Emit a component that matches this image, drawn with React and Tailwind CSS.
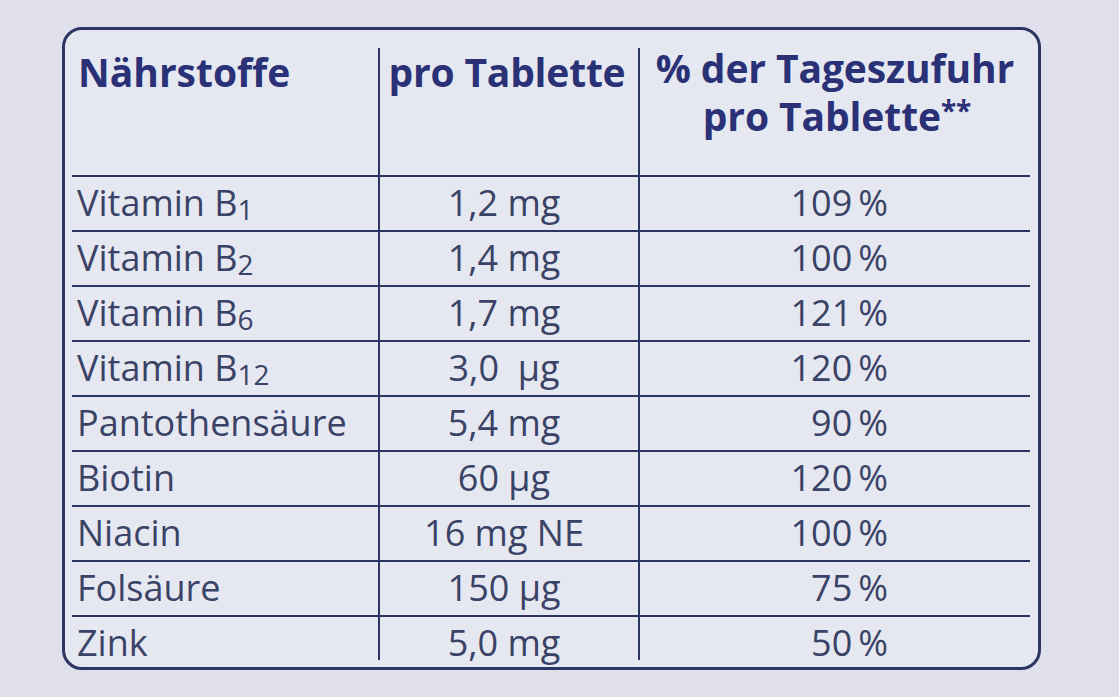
const rows = [
  { name: "Vitamin B", sub: "1", amount: "1,2 mg", pct: "109\u2009%" },
  { name: "Vitamin B", sub: "2", amount: "1,4 mg", pct: "100\u2009%" },
  { name: "Vitamin B", sub: "6", amount: "1,7 mg", pct: "121\u2009%" },
  { name: "Vitamin B", sub: "12", amount: "3,0\u00a0\u00a0µg", pct: "120\u2009%" },
  { name: "Pantothensäure", amount: "5,4 mg", pct: "90\u2009%" },
  { name: "Biotin", amount: "60 µg", pct: "120\u2009%" },
  { name: "Niacin", amount: "16 mg NE", pct: "100\u2009%" },
  { name: "Folsäure", amount: "150 µg", pct: "75\u2009%" },
  { name: "Zink", amount: "5,0 mg", pct: "50\u2009%" },
];

export default function App() {
  return (
    <div
      className="w-[1119px] h-[697px] bg-[#e0dfec] overflow-hidden pt-[27px] pl-[62px]"
      style={{ fontFamily: '"Open Sans", "Noto Sans", sans-serif' }}
    >
      <div className="w-[979px] h-[643px] border-[3px] border-[#2d3562] rounded-[20px] bg-[#e6e8f1] pt-[18px] pl-[7px] pr-[8px] pb-[7px] flex flex-col">
        {/* header */}
        <div className="flex h-[127px] shrink-0 text-[#2a3176] font-bold text-[39px] leading-[48px]">
          <div className="w-[306px] pl-[6px]">Nährstoffe</div>
          <div className="w-[260px] border-l-2 border-[#2d3562] text-center pr-[4px] tracking-[-0.2px]">
            pro Tablette
          </div>
          <div className="flex-1 border-l-2 border-[#2d3562] text-center tracking-[-0.1px]">
            <div className="-mt-[4px]">% der Tageszufuhr</div>
            <div className="pl-[4px]">
              pro Tablette
              <span className="text-[28px] align-[10px] leading-none">**</span>
            </div>
          </div>
        </div>
        {/* body */}
        {rows.map((r, i) => (
          <div
            key={i}
            className={
              "flex shrink-0 border-t-2 border-[#2d3562] text-[36px] leading-[52px] text-[#3a4366] " +
              (i === rows.length - 1 ? "h-[45px]" : "h-[55px]")
            }
          >
            <div className="w-[306px] pl-[5px] whitespace-nowrap">
              {r.name}
              {r.sub && (
                <span className="text-[28px] align-[-4px] leading-none">{r.sub}</span>
              )}
            </div>
            <div className="w-[260px] border-l-2 border-[#2d3562] text-center pr-[10px] whitespace-pre">
              {r.amount}
            </div>
            <div className="flex-1 border-l-2 border-[#2d3562] text-right pr-[142px] whitespace-nowrap">
              {r.pct}
            </div>
          </div>
        ))}
      </div>
    </div>
  );
}
